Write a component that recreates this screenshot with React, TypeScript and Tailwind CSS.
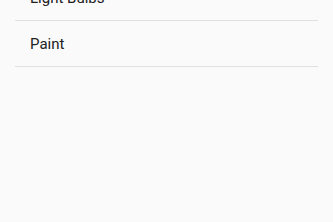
import React from 'react';

const items = ['Light Bulbs', 'Paint'];

export default function App() {
  return (
    <div className="h-[222px] w-full overflow-hidden bg-[#fafafa] font-['Roboto',sans-serif]">
      <ul className="mx-[15px] -mt-[25px]">
        {items.map((name) => (
          <li
            key={name}
            className="flex h-[46px] items-center border-b border-[#e0e0e0] px-[15px] pt-[1px] text-[15px] text-[#212121]"
          >
            {name}
          </li>
        ))}
      </ul>
    </div>
  );
}
